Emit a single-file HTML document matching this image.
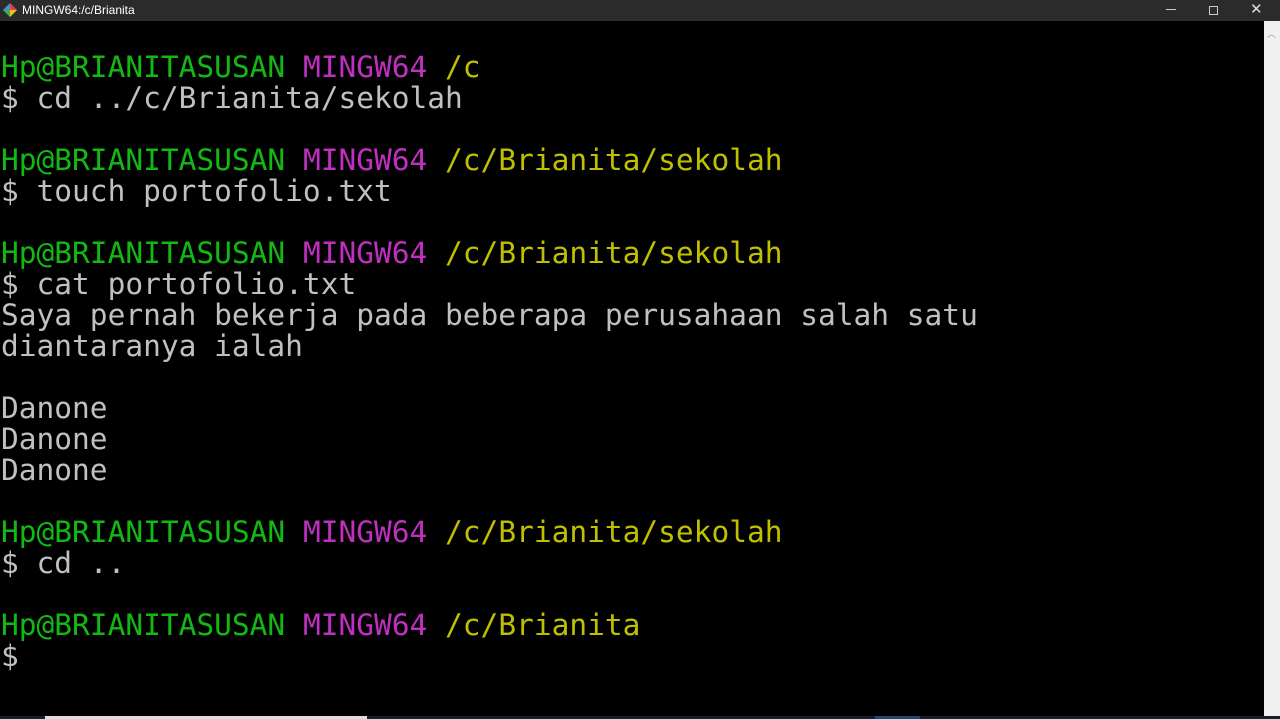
<!DOCTYPE html>
<html><head><meta charset="utf-8"><style>
body{margin:0;width:1280px;height:719px;background:#000;overflow:hidden;position:relative;font-family:"Liberation Sans",sans-serif}
.tb{position:absolute;left:0;top:0;width:1280px;height:21px;background:#2b2b2b;color:#fff;font-size:12px}
.tb .t{position:absolute;left:22px;top:3px}
.sb{position:absolute;right:0;top:21px;width:16px;height:695px;background:#f0f0f0}
.term{position:absolute;left:1px;top:21px;font-family:"DejaVu Sans Mono","Liberation Mono",monospace;font-size:29.5px;line-height:31px;color:#c0c0c0;white-space:pre;letter-spacing:0}
.g{color:#13b913}.m{color:#c030c0}.y{color:#c0c000}
.bot{position:absolute;left:0;top:716px;width:1280px;height:3px;background:#0d2230}
</style></head><body>
<div class="tb"><svg style="position:absolute;left:3px;top:3px" width="14" height="14" viewBox="0 0 14 14"><polygon points="7,0 14,7 7,14 0,7" fill="#4a90d9"/><polygon points="7,0 14,7 7,7" fill="#e04040"/><polygon points="14,7 7,14 7,7" fill="#f0c020"/><polygon points="7,14 0,7 7,7" fill="#40b040"/></svg><span class="t">MINGW64:/c/Brianita</span>
<span style="position:absolute;left:1166px;top:9px;width:10px;height:1px;background:#ccc"></span>
<span style="position:absolute;left:1209px;top:6px;width:7px;height:7px;border:1px solid #ccc"></span>
<span style="position:absolute;left:1250px;top:0px;font-size:15px;color:#ddd">✕</span></div>
<div class="term">
<span class="g">Hp@BRIANITASUSAN</span> <span class="m">MINGW64</span> <span class="y">/c</span>
$ cd ../c/Brianita/sekolah

<span class="g">Hp@BRIANITASUSAN</span> <span class="m">MINGW64</span> <span class="y">/c/Brianita/sekolah</span>
$ touch portofolio.txt

<span class="g">Hp@BRIANITASUSAN</span> <span class="m">MINGW64</span> <span class="y">/c/Brianita/sekolah</span>
$ cat portofolio.txt
Saya pernah bekerja pada beberapa perusahaan salah satu
diantaranya ialah

Danone
Danone
Danone

<span class="g">Hp@BRIANITASUSAN</span> <span class="m">MINGW64</span> <span class="y">/c/Brianita/sekolah</span>
$ cd ..

<span class="g">Hp@BRIANITASUSAN</span> <span class="m">MINGW64</span> <span class="y">/c/Brianita</span>
$
</div>
<div class="sb"><span style="position:absolute;left:3px;top:6px;font-size:9px;color:#999">︿</span></div>
<div class="bot"><span style="position:absolute;left:45px;width:322px;height:3px;background:#ddd"></span><span style="position:absolute;left:875px;width:45px;height:3px;background:#1a4a70"></span></div>
</body></html>
